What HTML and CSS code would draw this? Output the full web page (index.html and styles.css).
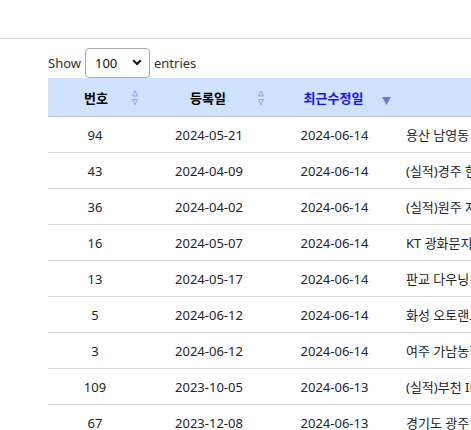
FILE: index.html
```html
<!DOCTYPE html>
<html lang="ko">
<head>
<meta charset="utf-8">
<title>목록</title>
<link rel="stylesheet" href="styles.css">
</head>
<body>
<div class="page">
  <div class="topbar"></div>
  <div class="content">
    <div class="length">
      <span>Show</span>
      <div class="select"><span>100</span>
        <svg class="chev" width="10" height="7" viewBox="0 0 10 7"><path d="M1.2 1.2 L5 5 L8.8 1.2" fill="none" stroke="#111" stroke-width="2.2"/></svg>
      </div>
      <span>entries</span>
    </div>
    <table class="grid">
      <colgroup>
        <col class="c1"><col class="c2"><col class="c3"><col class="c4">
      </colgroup>
      <thead>
        <tr>
          <th>번호<svg class="sort" width="6" height="17" viewBox="0 0 6 17"><path d="M3 0.8 L5.5 6 L0.5 6 Z M0.5 9.5 L5.5 9.5 L3 14.7 Z" fill="none" stroke="#9a9af0" stroke-width="1"/></svg></th>
          <th>등록일<svg class="sort" width="6" height="17" viewBox="0 0 6 17"><path d="M3 0.8 L5.5 6 L0.5 6 Z M0.5 9.5 L5.5 9.5 L3 14.7 Z" fill="none" stroke="#9a9af0" stroke-width="1"/></svg></th>
          <th class="active">최근수정일<svg class="sort down" width="9" height="8" viewBox="0 0 9 8"><path d="M0 0 L9 0 L4.5 8 Z" fill="#7373d9"/></svg></th>
          <th class="title"></th>
        </tr>
      </thead>
      <tbody>
        <tr><td>94</td><td>2024-05-21</td><td>2024-06-14</td><td class="t">용산 남영동 업무시설 신축공사</td></tr>
        <tr><td>43</td><td>2024-04-09</td><td>2024-06-14</td><td class="t">(실적)경주 한수원 사옥</td></tr>
        <tr><td>36</td><td>2024-04-02</td><td>2024-06-14</td><td class="t">(실적)원주 지식산업센터</td></tr>
        <tr><td>16</td><td>2024-05-07</td><td>2024-06-14</td><td class="t">KT 광화문지사 리모델링</td></tr>
        <tr><td>13</td><td>2024-05-17</td><td>2024-06-14</td><td class="t">판교 다우닝 오피스</td></tr>
        <tr><td>5</td><td>2024-06-12</td><td>2024-06-14</td><td class="t">화성 오토랜드 물류센터</td></tr>
        <tr><td>3</td><td>2024-06-12</td><td>2024-06-14</td><td class="t">여주 가남농협 창고</td></tr>
        <tr><td>109</td><td>2023-10-05</td><td>2024-06-13</td><td class="t">(실적)부천 IDC 센터</td></tr>
        <tr><td>67</td><td>2023-12-08</td><td>2024-06-13</td><td class="t">경기도 광주 물류창고</td></tr>
      </tbody>
    </table>
  </div>
</div>
</body>
</html>
```
FILE: styles.css
```css
html, body {
  margin: 0;
  padding: 0;
  background: #fff;
}
body {
  font-family: "Noto Sans", "Noto Sans CJK KR", sans-serif;
  font-size: 13px;
  color: #212529;
}
.page {
  width: 471px;
  height: 430px;
  overflow: hidden;
}
.topbar {
  height: 38px;
  border-bottom: 1px solid #d9d9d9;
}
.content {
  padding-left: 48px;
}
.length {
  display: flex;
  align-items: center;
  gap: 4px;
  height: 31px;
  margin-top: 8px;
  color: #333;
}
.select {
  width: 65px;
  height: 30px;
  box-sizing: border-box;
  border: 1px solid #aaa;
  border-radius: 4px;
  display: flex;
  align-items: center;
  justify-content: space-between;
  padding: 0 7px 0 9px;
  color: #111;
}
.chev {
  display: block;
}
.grid {
  border-collapse: collapse;
  table-layout: fixed;
  width: 649px;
}
.c1 { width: 98px; }
.c2 { width: 126px; }
.c3 { width: 125px; }
.c4 { width: 300px; }
.grid th {
  position: relative;
  height: 38px;
  background: #cfe2ff;
  border-bottom: 1px solid #c4c9d1;
  font-weight: bold;
  color: #000;
  text-align: center;
  padding: 0 2px 0 0;
}
.grid th.active {
  color: #1414ee;
}
.sort {
  position: absolute;
  right: 8px;
  top: 12px;
}
.sort.down {
  right: 6px;
  top: 19px;
}
.grid td {
  height: 35px;
  border-bottom: 1px solid #d6d6d6;
  text-align: center;
  padding: 0;
  white-space: nowrap;
}
.grid td:first-child {
  padding-right: 4px;
}
.grid td.t {
  text-align: left;
  padding-left: 9px;
}
```
